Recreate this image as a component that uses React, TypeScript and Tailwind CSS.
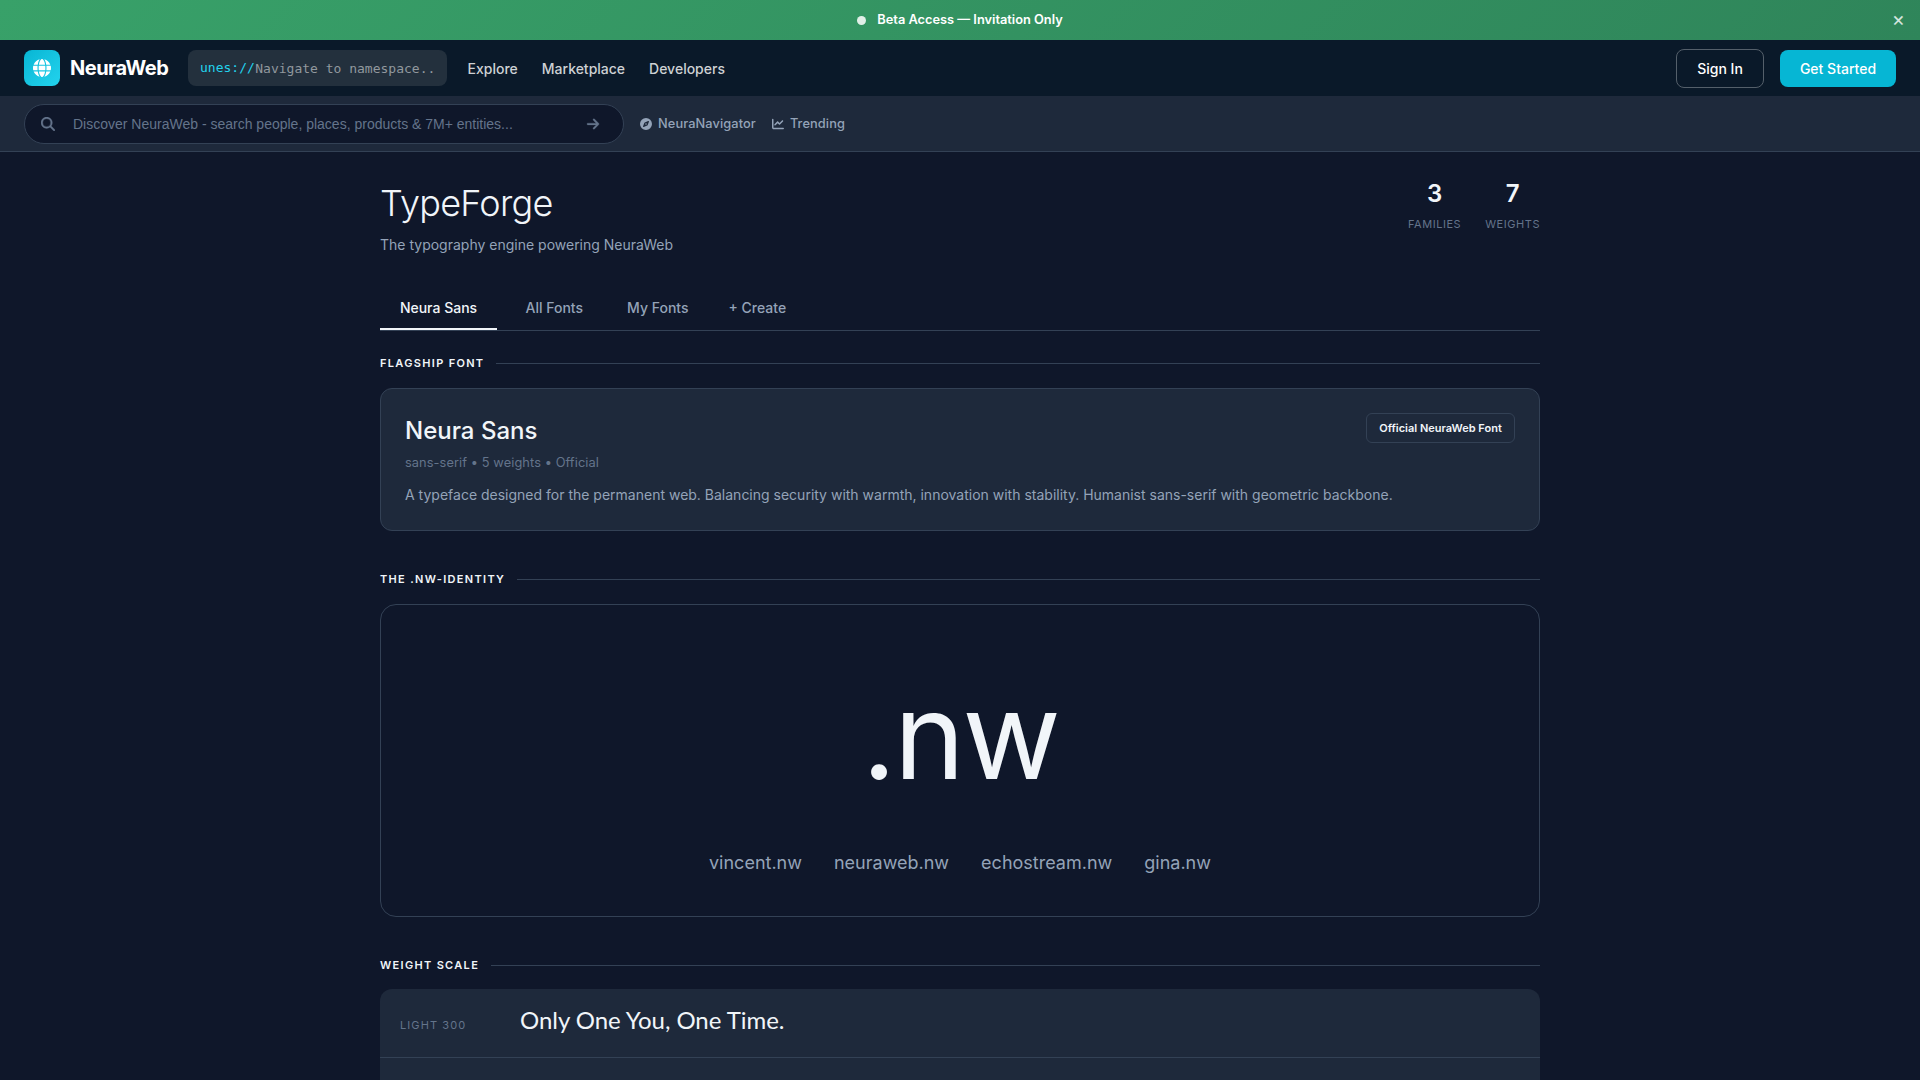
import { FaArrowRight, FaChartLine, FaCompass, FaGlobe, FaMagnifyingGlass } from "react-icons/fa6"

const domains = ["vincent.nw", "neuraweb.nw", "echostream.nw", "gina.nw"]

const Banner = () => {
  return <div className="relative h-10 flex items-center justify-center gap-[11px] bg-[linear-gradient(135deg,#38a169,#2f855a)] text-white">
    <span className="w-[9px] h-[9px] rounded-full bg-white/85" />
    <span className="text-[12.8px] font-semibold leading-5">Beta Access — Invitation Only</span>
    <button className="absolute right-[15px] top-[6px] text-[20px] leading-[26px] text-white/80">×</button>
  </div>
}

const Navbar = () => {
  return <nav className="h-14 px-6 flex items-center bg-[#0a1929]">
    {/* left */}
    <div className="w-9 h-9 rounded-lg flex items-center justify-center bg-linear-135 from-[#06b6d4] to-[#22d3ee] text-white">
      <FaGlobe size={18} />
    </div>
    <span className="ml-[10px] w-[98px] text-[20px] font-bold tracking-[-0.5px] text-white">NeuraWeb</span>
    <div className="ml-5 w-[259px] h-9 rounded-lg bg-[#23303d] px-3 flex items-center text-[13px] font-['DejaVu_Sans_Mono',monospace] whitespace-nowrap">
      <span className="text-[#22d3ee]">unes://</span>
      <span className="pt-[2px] pl-[0.5px] text-[#91989e]">Navigate to namespace..</span>
    </div>
    <div className="ml-[20.5px] flex gap-6 text-[14px] font-medium text-[#ced1d4]">
      <a>Explore</a>
      <a>Marketplace</a>
      <a>Developers</a>
    </div>
    {/* right */}
    <div className="ml-auto flex items-center gap-4 text-[14px] font-medium text-white">
      <button className="w-[88px] h-[39px] rounded-lg border border-[#545f6a]">Sign In</button>
      <button className="w-[116px] h-[37px] rounded-lg bg-[#06b6d4]">Get Started</button>
    </div>
  </nav>
}

const SearchBar = () => {
  return <div className="h-14 px-6 flex items-center bg-[#1e293b] border-b border-[#334155]">
    <div className="w-[600px] h-10 rounded-full border border-[#334155] bg-[#0f172a] pl-4 pr-[23px] flex items-center text-[#64748b]">
      <FaMagnifyingGlass size={14} strokeWidth={10} />
      <span className="ml-[18px] pt-[2px] font-['Liberation_Sans',sans-serif] text-[14px]">Discover NeuraWeb - search people, places, products &amp; 7M+ entities...</span>
      <FaArrowRight size={14} strokeWidth={10} className="ml-auto" />
    </div>
    <div className="ml-4 flex items-center gap-4 text-[12.8px] tracking-[0.1px] font-medium text-[#94a3b8]">
      <a className="flex items-center gap-[6px]"><FaCompass size={12} />NeuraNavigator</a>
      <a className="flex items-center gap-[6px]"><FaChartLine size={12} />Trending</a>
    </div>
  </div>
}

const Stat = ({ value, label }: { value: string, label: string }) => {
  return <div className="text-center">
    <div className="text-[24px] leading-[38px] font-semibold text-[#f1f5f9]">{value}</div>
    <div className="mt-[2px] text-[11px] leading-[18px] tracking-[0.55px] uppercase text-[#64748b]">{label}</div>
  </div>
}

const SectionTitle = ({ children }: { children: string }) => {
  return <div className="flex items-center gap-3 h-[18px] text-[11px] font-semibold tracking-[1.32px] uppercase text-[#f1f5f9]">
    <span>{children}</span>
    <span className="flex-1 h-px bg-[#334155]" />
  </div>
}

const App = () => {
  return <div className="h-[1080px] overflow-hidden bg-[#0f172a] font-['Inter',sans-serif]">
    <Banner />
    <Navbar />
    <SearchBar />

    <main className="w-[1160px] mx-auto pt-6">
      <header className="flex justify-between h-[108px]">
        <div>
          <h1 className="text-[36px] leading-[54px] font-light tracking-[-0.72px] text-[#f1f5f9]">TypeForge</h1>
          <p className="mt-[4px] text-[14px] leading-[22px] text-[#94a3b8]">The typography engine powering NeuraWeb</p>
        </div>
        <div className="flex gap-6 -mt-px">
          <Stat value="3" label="Families" />
          <Stat value="7" label="Weights" />
        </div>
      </header>

      {/* tabs */}
      <div className="flex h-[47px] border-b border-[#334155] text-[14px] leading-[22px] font-medium text-[#94a3b8]">
        <div className="w-[117px] pt-[13px] text-center text-[#f1f5f9] border-b-2 border-[#f1f5f9]">Neura Sans</div>
        <div className="ml-[8.5px] px-5 pt-[13px]">All Fonts</div>
        <div className="ml-1 px-5 pt-[13px]">My Fonts</div>
        <div className="px-5 pt-[13px]">+ Create</div>
      </div>

      <section className="mt-[23px]">
        <SectionTitle>Flagship Font</SectionTitle>
        <div className="mt-4 h-[143px] rounded-xl border border-[#334155] bg-[#1e293b] p-6">
          <div className="flex justify-between items-start">
            <div>
              <h2 className="text-[24px] leading-[36px] font-medium text-[#f1f5f9]">Neura Sans</h2>
              <p className="mt-[4px] text-[12.8px] leading-[20px] tracking-[0.09px] text-[#64748b]">sans-serif • 5 weights • Official</p>
            </div>
            <span className="w-[149px] h-[30px] flex items-center justify-center rounded-md border border-[#334155] text-[11px] font-semibold text-[#f1f5f9]">Official NeuraWeb Font</span>
          </div>
          <p className="mt-[10px] text-[14px] leading-[24px] text-[#94a3b8]">A typeface designed for the permanent web. Balancing security with warmth, innovation with stability. Humanist sans-serif with geometric backbone.</p>
        </div>
      </section>

      <section className="mt-[39px]">
        <SectionTitle>The .nw-Identity</SectionTitle>
        <div className="mt-4 h-[313px] rounded-2xl border border-[#334155] pt-[58px] text-center">
          <div className="text-[120px] leading-[145px] tracking-[-2.4px] text-[#f1f5f9]">.nw</div>
          <div className="mt-[40px] flex justify-center gap-8 text-[18px] leading-[29px] text-[#94a3b8]">
            {domains.map((domain) => <span key={domain}>{domain}</span>)}
          </div>
        </div>
      </section>

      <section className="mt-[39px]">
        <SectionTitle>Weight Scale</SectionTitle>
        <div className="mt-[15px] rounded-t-xl overflow-hidden bg-[#1e293b]">
          <div className="h-[69px] px-5 flex items-center border-b border-[#334155]">
            <span className="w-[120px] pt-[4px] text-[11px] tracking-[1.1px] text-[#64748b]">LIGHT 300</span>
            <span className="pb-[6px] font-['Lato',sans-serif] text-[24px] leading-[36px] tracking-[-0.05px] text-[#f1f5f9]">Only One You, One Time.</span>
          </div>
          <div className="h-[69px]" />
        </div>
      </section>
    </main>
  </div>
}

export default App
